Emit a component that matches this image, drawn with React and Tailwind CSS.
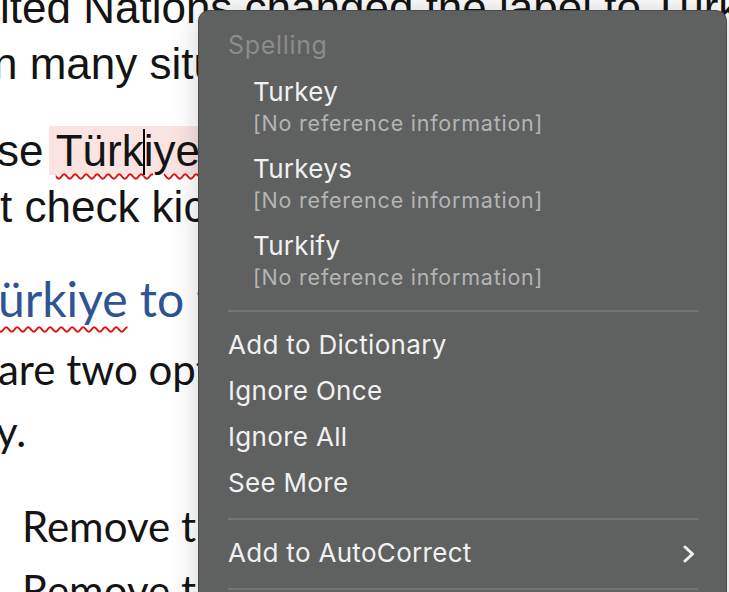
import { useState } from "react";

const suggestions = ["Turkey", "Turkeys", "Turkify"];
const actions = ["Add to Dictionary", "Ignore Once", "Ignore All", "See More"];

function Separator() {
  return (
    <div className="h-[24px] flex items-center pl-[29px] pr-[28px]">
      <div className="h-[2px] w-full bg-[#737474]" />
    </div>
  );
}

function SpellingMenu() {
  return (
    <div
      className="absolute left-[198px] top-[10px] w-[529px] h-[640px] rounded-[11px] bg-[#5f6060] border border-[#4a4b4b] shadow-[0_0_28px_rgba(0,0,0,0.18)] text-[#f1f1f1]"
      style={{ fontFamily: "Inter, 'Liberation Sans', sans-serif" }}
    >
      <div className="pt-[18px] pl-[29px] text-[25px] tracking-[0.027em] leading-[32px] text-[#8b8c8c] mb-[15px]">Spelling</div>
      <div className="flex flex-col gap-[14px] pl-[54px]">
        {suggestions.map(s => (
          <div key={s}>
            <div className="text-[26px] tracking-[0.012em] leading-[32px]">{s}</div>
            <div className="text-[21.5px] tracking-[0.036em] leading-[31px] text-[#b3b4b4]">[No reference information]</div>
          </div>
        ))}
      </div>
      <div className="mt-[6px]">
        <Separator />
      </div>
      {actions.map(a => (
        <div key={a} className="h-[46px] pb-[3px] flex items-center pl-[29px] text-[26px] tracking-[0.012em]">
          {a}
        </div>
      ))}
      <Separator />
      <div className="h-[46px] pb-[3px] flex items-center justify-between pl-[29px] pr-[30px] text-[26px] tracking-[0.012em]">
        <span>Add to AutoCorrect</span>
        <svg width="14" height="18" viewBox="0 0 14 18" fill="none" className="mt-[2px]">
          <polyline points="3,2 10.5,9 3,16" stroke="#f1f1f1" strokeWidth="3" strokeLinecap="round" strokeLinejoin="round" />
        </svg>
      </div>
      <Separator />
    </div>
  );
}

export default function App() {
  const [menuOpen] = useState(true);

  return (
    <div className="relative w-[729px] h-[592px] overflow-hidden bg-white">
      <div className="-mt-[20px] whitespace-nowrap text-[#141414]">
        <div className="text-[44px] leading-[56px]" style={{ fontFamily: "'Liberation Sans', Arial, sans-serif" }}>
          <div>ited Nations changed the label to Türkiye</div>
          <div className="-ml-[7px]">n many situations, the new name is</div>
          <div className="mt-[31px] -ml-[3px] relative">
            se{" "}
            <span className="-ml-[7px] pl-[7px] bg-[#fbe3e2] underline decoration-wavy decoration-[#e01010] decoration-[2px] underline-offset-[7px]">
              Türk<span className="inline-block w-[2px] h-[46px] bg-black align-[-9px] -mx-[1px]" />iye
            </span>{" "}
            in a document, the
          </div>
          <div>t check kicks in and flags it</div>
        </div>

        <div style={{ fontFamily: "Lato, 'Open Sans', sans-serif" }}>
          <div className="mt-[34px] text-[48px] leading-[60px] text-[#2f5496] -ml-[2px]">
            <span className="underline decoration-wavy decoration-[#e01010] decoration-[2px] underline-offset-[9px]">ürkiye</span> to the dictionary
          </div>
          <div className="mt-[9px] text-[42px] leading-[62px]">
            <div className="-ml-[2px]">are two options to fix this</div>
            <div className="-ml-[4px]">y.</div>
          </div>
          <div className="mt-[32px] pl-[22px] text-[42px] leading-[64px]">
            <div>Remove the red underline</div>
            <div>Remove the word from</div>
          </div>
        </div>
      </div>

      {menuOpen && <SpellingMenu />}
    </div>
  );
}
